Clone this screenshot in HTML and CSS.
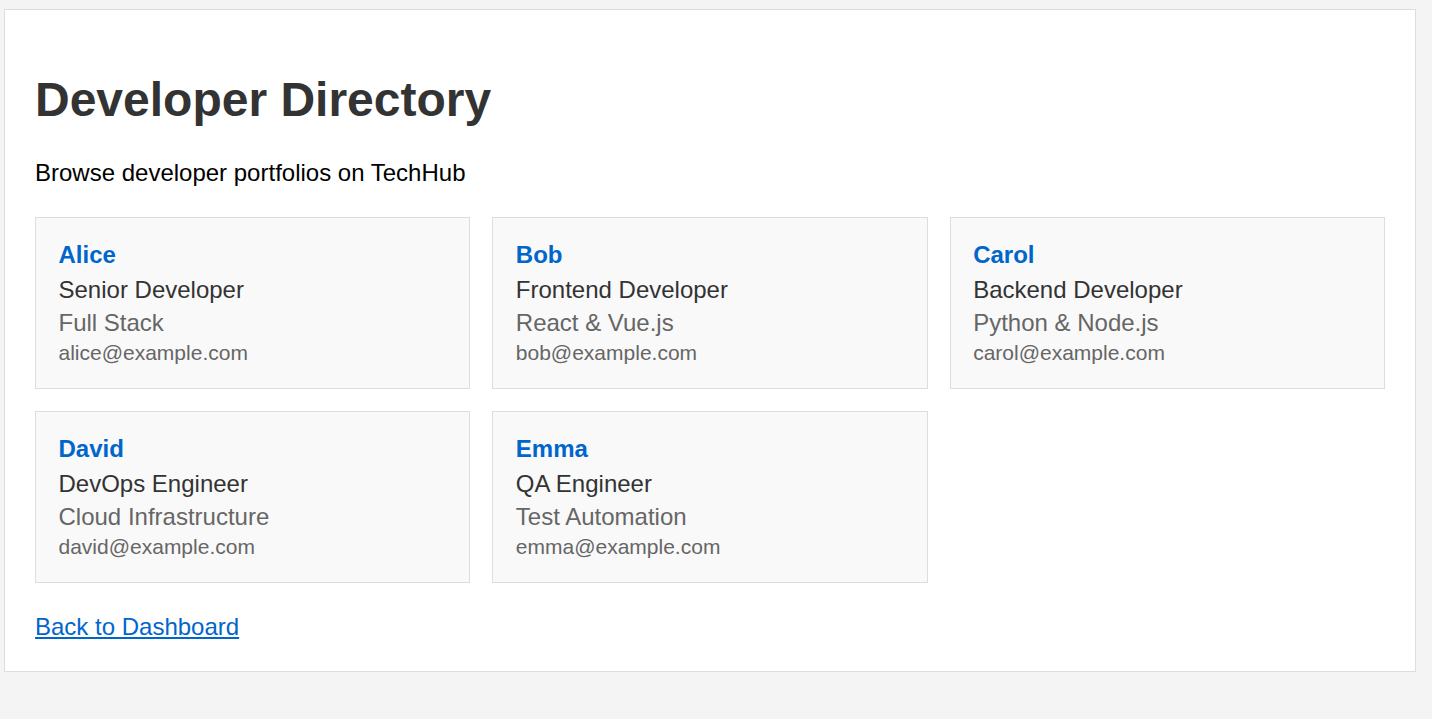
FILE: index.html
```html
<!DOCTYPE html>
<html lang="en">
<head>
<meta charset="utf-8">
<title>Developer Directory</title>
<link rel="stylesheet" href="styles.css">
</head>
<body>
<div class="container">
  <h1 class="title">Developer Directory</h1>
  <p class="subtitle">Browse developer portfolios on TechHub</p>
  <div class="grid">
    <div class="card">
      <h3 class="name">Alice</h3>
      <p class="role">Senior Developer</p>
      <p class="spec">Full Stack</p>
      <p class="email">alice@example.com</p>
    </div>
    <div class="card">
      <h3 class="name">Bob</h3>
      <p class="role">Frontend Developer</p>
      <p class="spec">React &amp; Vue.js</p>
      <p class="email">bob@example.com</p>
    </div>
    <div class="card">
      <h3 class="name">Carol</h3>
      <p class="role">Backend Developer</p>
      <p class="spec">Python &amp; Node.js</p>
      <p class="email">carol@example.com</p>
    </div>
    <div class="card">
      <h3 class="name">David</h3>
      <p class="role">DevOps Engineer</p>
      <p class="spec">Cloud Infrastructure</p>
      <p class="email">david@example.com</p>
    </div>
    <div class="card">
      <h3 class="name">Emma</h3>
      <p class="role">QA Engineer</p>
      <p class="spec">Test Automation</p>
      <p class="email">emma@example.com</p>
    </div>
  </div>
  <div class="back"><a href="#" class="back-link">Back to Dashboard</a></div>
</div>
</body>
</html>
```

FILE: styles.css
```css
html, body {
  margin: 0;
  padding: 0;
}
body {
  background: #f4f4f4;
  font-family: "Liberation Sans", Arial, sans-serif;
  font-size: 24px;
  color: #000;
  padding: 9px 16px 47px 4px;
}
.container {
  background: #fff;
  border: 1px solid #dddddd;
  padding: 30px;
}
.title {
  font-size: 48px;
  font-weight: bold;
  color: #333;
  margin: 32px 0 32px;
}
.subtitle {
  margin: 24px 0 0;
  font-size: 24px;
}
.grid {
  display: grid;
  grid-template-columns: repeat(3, 1fr);
  column-gap: 22px;
  row-gap: 22.5px;
  margin-top: 30px;
}
.card {
  background: #f9f9f9;
  border: 1px solid #dddddd;
  padding: 22.5px;
}
.name {
  margin: 0 0 7.5px;
  font-size: 24px;
  font-weight: bold;
  color: #0066cc;
}
.role {
  margin: 0 0 4.5px;
  color: #333;
}
.spec {
  margin: 0 0 4.5px;
  color: #666;
}
.email {
  margin: 0;
  font-size: 21px;
  color: #666;
}
.back {
  margin-top: 30px;
}
.back-link {
  color: #0066cc;
  text-decoration: underline;
}
```
